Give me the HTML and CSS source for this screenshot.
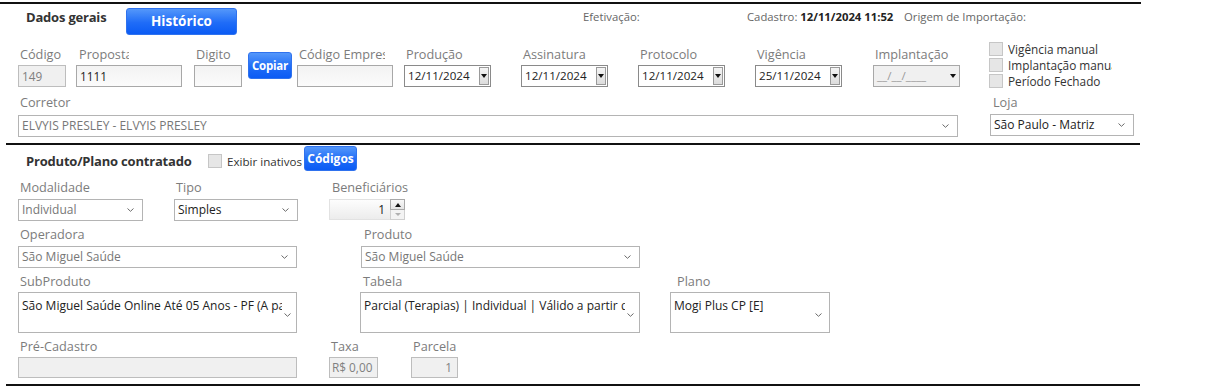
FILE: index.html
```html
<!DOCTYPE html>
<html lang="pt">
<head>
<meta charset="utf-8">
<title>Dados gerais</title>
<link rel="stylesheet" href="styles.css">
</head>
<body>
<div class="page">
  <div class="rule rule-top"></div>

  <div class="sec-head">
    <div class="sec-title">Dados gerais</div>
    <button class="btn btn-hist">Histórico</button>
    <div class="meta">
      <span class="meta-efet">Efetivação:</span>
      <span class="meta-cad">Cadastro: <b>12/11/2024 11:52</b></span>
      <span class="meta-orig">Origem de Importação:</span>
    </div>
  </div>

  <div class="row row-main">
    <div class="fld"><div class="lbl lbl-cod">Código</div><div class="inp inp-dis w48">149</div></div>
    <div class="fld"><div class="lbl lbl-prop">Proposta</div><div class="inp w106">1111</div></div>
    <div class="fld"><div class="lbl">Digito</div><div class="inp w48"></div></div>
    <div class="fld"><button class="btn btn-copiar">Copiar</button></div>
    <div class="fld"><div class="lbl lbl-emp">Código Empresa</div><div class="inp w96"></div></div>
    <div class="fld"><div class="lbl">Produção</div><div class="date"><span class="date-txt">12/11/2024</span><span class="dd"><i class="tri"></i></span></div></div>
    <div class="fld"><div class="lbl">Assinatura</div><div class="date"><span class="date-txt">12/11/2024</span><span class="dd"><i class="tri"></i></span></div></div>
    <div class="fld"><div class="lbl">Protocolo</div><div class="date"><span class="date-txt">12/11/2024</span><span class="dd"><i class="tri"></i></span></div></div>
    <div class="fld"><div class="lbl">Vigência</div><div class="date"><span class="date-txt">25/11/2024</span><span class="dd"><i class="tri"></i></span></div></div>
    <div class="fld"><div class="lbl">Implantação</div><div class="date date-dis"><span class="date-txt">__/__/____</span><span class="dd"><i class="tri"></i></span></div></div>
    <div class="checks">
      <label class="chk"><span class="box"></span><span class="chk-txt">Vigência manual</span></label>
      <label class="chk"><span class="box"></span><span class="chk-txt">Implantação manual</span></label>
      <label class="chk"><span class="box"></span><span class="chk-txt">Período Fechado</span></label>
    </div>
  </div>

  <div class="row row-corretor">
    <div class="fld"><div class="lbl">Corretor</div>
      <div class="sel sel-corretor"><span class="sel-txt muted">ELVYIS PRESLEY - ELVYIS PRESLEY</span><svg class="chev" viewBox="0 0 7 4"><polyline points="0.5,0.5 3.5,3.3 6.5,0.5"/></svg></div>
    </div>
    <div class="fld fld-loja"><div class="lbl">Loja</div>
      <div class="sel sel-loja"><span class="sel-txt">São Paulo - Matriz</span><svg class="chev" viewBox="0 0 7 4"><polyline points="0.5,0.5 3.5,3.3 6.5,0.5"/></svg></div>
    </div>
  </div>

  <div class="rule rule-mid"></div>

  <div class="sec-head2">
    <div class="sec-title2">Produto/Plano contratado</div>
    <label class="chk chk-inline"><span class="box"></span><span class="chk-txt2">Exibir inativos</span></label>
    <button class="btn btn-codigos">Códigos</button>
  </div>

  <div class="row row-a">
    <div class="fld"><div class="lbl">Modalidade</div>
      <div class="sel h21 w125"><span class="sel-txt muted">Individual</span><svg class="chev" viewBox="0 0 7 4"><polyline points="0.5,0.5 3.5,3.3 6.5,0.5"/></svg></div></div>
    <div class="fld"><div class="lbl">Tipo</div>
      <div class="sel h21 w124"><span class="sel-txt">Simples</span><svg class="chev" viewBox="0 0 7 4"><polyline points="0.5,0.5 3.5,3.3 6.5,0.5"/></svg></div></div>
    <div class="fld"><div class="lbl lbl-ben">Beneficiários</div>
      <div class="num">
        <div class="num-inp">1</div>
        <div class="spin"><span class="sp sp-up"><i class="tri-up"></i></span><span class="sp sp-dn"><i class="tri-dn"></i></span></div>
      </div>
    </div>
  </div>

  <div class="row row-b">
    <div class="fld"><div class="lbl">Operadora</div>
      <div class="sel h23 w279"><span class="sel-txt muted">São Miguel Saúde</span><svg class="chev" viewBox="0 0 7 4"><polyline points="0.5,0.5 3.5,3.3 6.5,0.5"/></svg></div></div>
    <div class="fld"><div class="lbl lbl-off3">Produto</div>
      <div class="sel h23 w279"><span class="sel-txt muted">São Miguel Saúde</span><svg class="chev" viewBox="0 0 7 4"><polyline points="0.5,0.5 3.5,3.3 6.5,0.5"/></svg></div></div>
  </div>

  <div class="row row-c">
    <div class="fld"><div class="lbl">SubProduto</div>
      <div class="mbox w279"><span class="mbox-txt">São Miguel Saúde Online Até 05 Anos - PF (A partir de 0 vidas)</span><svg class="chev chev-m" viewBox="0 0 7 4"><polyline points="0.5,0.5 3.5,3.3 6.5,0.5"/></svg></div></div>
    <div class="fld"><div class="lbl lbl-off3">Tabela</div>
      <div class="mbox w280"><span class="mbox-txt">Parcial (Terapias) | Individual | Válido a partir de 01/11/2024</span><svg class="chev chev-m" viewBox="0 0 7 4"><polyline points="0.5,0.5 3.5,3.3 6.5,0.5"/></svg></div></div>
    <div class="fld"><div class="lbl lbl-off7">Plano</div>
      <div class="mbox w160"><span class="mbox-txt">Mogi Plus CP [E]</span><svg class="chev chev-m" viewBox="0 0 7 4"><polyline points="0.5,0.5 3.5,3.3 6.5,0.5"/></svg></div></div>
  </div>

  <div class="row row-d">
    <div class="fld"><div class="lbl">Pré-Cadastro</div><div class="inp inp-dis h21 w279"></div></div>
    <div class="fld"><div class="lbl">Taxa</div><div class="inp inp-dis h21 w49 pad3">R$ 0,00</div></div>
    <div class="fld"><div class="lbl">Parcela</div><div class="inp inp-dis h21 w47 right">1</div></div>
  </div>

  <div class="rule rule-bot"></div>
</div>
</body>
</html>
```

FILE: styles.css
```css
* { box-sizing: border-box; }
html, body { margin: 0; padding: 0; background: #fff; }
body {
  font-family: "Open Sans", "Noto Sans", "DejaVu Sans", sans-serif;
  color: #222;
  width: 1214px;
  height: 387px;
  overflow: hidden;
}
.page { width: 1214px; }

.rule { height: 2px; background: #111; }
.rule-top { margin-top: 2px; width: 1141px; }
.rule-mid { margin-left: 6px; width: 1134px; margin-top: 6px; }
.rule-bot { margin-left: 6px; width: 1134px; margin-top: 6px; }

/* buttons */
.btn {
  font-family: inherit;
  color: #fff;
  font-weight: 700;
  border: 1px solid #2f72ee;
  border-radius: 3px;
  background: linear-gradient(#5497fa, #1f6cf7 55%, #0b5bf4);
  padding: 0;
  cursor: pointer;
  line-height: 1;
}
.btn-hist {
  width: 111px; height: 27px;
  margin-top: 4px;
  font-size: 13.5px;
}
.btn-copiar {
  width: 44px; height: 27px;
  margin-top: 9px;
  font-size: 11.5px;
  letter-spacing: -0.2px;
}
.btn-codigos {
  width: 53px; height: 25px;
  margin-top: 1px;
  font-size: 12px;
  margin-left: 2px;
}

/* header 1 */
.sec-head {
  display: flex;
  align-items: flex-start;
  height: 39px;
}
.sec-title {
  width: 126px;
  padding-left: 26px;
  margin-top: 3px;
  font-size: 13px;
  font-weight: 700;
  color: #333;
  line-height: 21px;
  letter-spacing: -0.2px;
}
.meta {
  display: flex;
  margin-left: 346px;
  margin-top: 3px;
  font-size: 11.3px;
  color: #666;
  line-height: 20px;
  white-space: nowrap;
}
.meta-efet { width: 164px; }
.meta-cad { width: 157px; }
.meta-cad b { color: #222; font-weight: 700; }

/* rows */
.row { display: grid; padding-left: 18px; align-items: start; }
.row-main {
  grid-template-columns: 58px 118px 54px 49px 107px 117px 117px 117px 118px 116px auto;
  height: 48px;
}
.row-corretor { grid-template-columns: 972px auto; }
.row-a { grid-template-columns: 156px 155px auto; margin-top: 1px; }
.row-b { grid-template-columns: 343px auto; margin-top: 3px; }
.row-c { grid-template-columns: 342px 310px auto; margin-top: 3px; }
.row-d { grid-template-columns: 311px 82px auto; margin-top: 3px; }

.fld { display: flex; flex-direction: column; }
.lbl {
  font-size: 12.7px;
  color: #7c7c7c;
  line-height: 20px;
  height: 20px;
  padding-left: 2px;
  white-space: nowrap;
  overflow: hidden;
  margin-bottom: 2px;
}
.row-main .lbl { margin-top: 1px; margin-bottom: 1px; }
.lbl-prop { width: 53px; padding-left: 3px; }
.lbl-emp { width: 88px; }
.lbl-off3 { padding-left: 3px; }
.lbl-off7 { padding-left: 7px; }
.row-corretor .lbl { height: 22px; line-height: 22px; margin-bottom: 2px; }
.fld-loja .lbl { padding-left: 3px; }
.fld-loja .sel { margin-top: -1px; }
.row-c .lbl, .row-d .lbl { margin-bottom: 1px; }

/* inputs */
.inp {
  height: 22px;
  border: 1px solid #a8a8a8;
  background: linear-gradient(#f3f3f3, #fbfbfb);
  font-size: 11.8px;
  line-height: 20px;
  padding-left: 3px;
  color: #222;
  white-space: nowrap;
  overflow: hidden;
}
.inp-dis {
  background: #f0f0f0;
  border-color: #bdbdbd;
  color: #808080;
}
.right { text-align: right; padding-right: 5px; }
.pad3 { padding-left: 2px; }
.h21 { height: 21px; line-height: 19px; }
.h23 { height: 23px; line-height: 21px; }
.w47 { width: 47px; } .w48 { width: 48px; } .w49 { width: 49px; }
.w96 { width: 96px; } .w106 { width: 106px; }
.w124 { width: 124px; } .w125 { width: 125px; }
.w160 { width: 160px; } .w279 { width: 279px; } .w280 { width: 280px; }

/* date pickers */
.date {
  width: 87px; height: 22px;
  border: 1px solid #8a8a8a;
  background: #fff;
  display: flex;
  align-items: stretch;
  font-size: 11.6px;
}
.date-txt { flex: 1; padding-left: 3px; line-height: 20px; white-space: nowrap; overflow: hidden; }
.date-dis { background: #f0f0f0; border-color: #a8a8a8; }
.date-dis .date-txt { color: #9a9a9a; }
.dd {
  width: 10px;
  margin: 1px 1px 1px 0;
  border: 1px solid #9a9a9a;
  background: linear-gradient(#f4f4f4, #dcdcdc);
  display: flex; align-items: center; justify-content: center;
}
.date-dis .dd { border-color: transparent; background: transparent; }
.tri { width: 0; height: 0; border-left: 3px solid transparent; border-right: 3px solid transparent; border-top: 4px solid #111; }

/* checkboxes */
.checks { display: flex; flex-direction: column; margin-top: -2px; }
.chk { display: flex; align-items: center; height: 16px; }
.box {
  width: 14px; height: 14px;
  background: #e6e6e6;
  border: 1px solid #c6c6c6;
  flex: none;
}
.chk-txt {
  font-size: 11.8px;
  color: #333;
  margin-left: 5px;
  width: 104px;
  white-space: nowrap;
  overflow: hidden;
}

/* selects */
.sel {
  position: relative;
  height: 22px;
  border: 1px solid #b4b4b4;
  background: #fff;
  font-size: 12px;
  line-height: 20px;
  display: flex;
  align-items: center;
}
.sel-corretor { width: 940px; }
.sel-loja { width: 144px; }
.sel-txt { padding-left: 3px; flex: 1; white-space: nowrap; overflow: hidden; }
.muted { color: #777; }
.chev {
  width: 7px; height: 4px;
  margin-right: 8px;
  flex: none;
  fill: none;
  stroke: #6a6a6a;
  stroke-width: 1;
}

/* multiline boxes */
.mbox {
  height: 41px;
  border: 1px solid #b4b4b4;
  background: #fff;
  display: flex;
  align-items: flex-start;
  font-size: 12px;
}
.mbox-txt {
  flex: 1;
  padding: 5px 0 0 3px;
  line-height: 16px;
  white-space: nowrap;
  overflow: hidden;
}
.chev-m { margin-top: 20px; margin-left: 2px; margin-right: 5px; }
.w160 .chev-m { margin-right: 7px; }

/* header 2 */
.sec-head2 {
  display: flex;
  align-items: flex-start;
  height: 31px;
}
.sec-title2 {
  width: 208px;
  padding-left: 26px;
  margin-top: 6px;
  font-size: 13px;
  font-weight: 700;
  color: #333;
  line-height: 20px;
  letter-spacing: -0.2px;
}
.chk-inline { margin-top: 8px; height: 16px; }
.chk-txt2 { font-size: 11.6px; color: #333; margin-left: 5px; white-space: nowrap; }

/* numeric */
.lbl-ben { padding-left: 3px; }
.num { display: flex; width: 76px; height: 21px; }
.num-inp {
  width: 61px;
  border: 1px solid #e2e2e2;
  border-right: none;
  background: linear-gradient(#fdfdfd, #ececec);
  text-align: right;
  font-size: 12px;
  line-height: 19px;
  padding-right: 5px;
  color: #222;
}
.spin { width: 15px; display: flex; flex-direction: column; }
.sp {
  flex: 1;
  display: flex; align-items: center; justify-content: center;
  border: 1px solid #a8a8a8;
  background: linear-gradient(#f8f8f8, #e4e4e4);
}
.sp-dn { border-top: none; border-color: #cfcfcf; background: #f3f3f3; }
.tri-up { width: 0; height: 0; border-left: 3px solid transparent; border-right: 3px solid transparent; border-bottom: 4px solid #111; }
.tri-dn { width: 0; height: 0; border-left: 3px solid transparent; border-right: 3px solid transparent; border-top: 3px solid #b0b0b0; }
```
